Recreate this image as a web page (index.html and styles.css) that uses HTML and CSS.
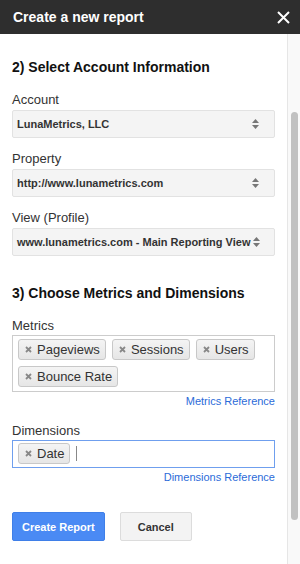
FILE: index.html
```html
<!DOCTYPE html>
<html lang="en">
<head>
    <meta charset="UTF-8">
    <meta name="viewport" content="width=device-width, initial-scale=1.0">
    <title>Create a new report</title>
    <link rel="stylesheet" href="styles.css">
</head>
<body>
    <header class="dialog-header">
        <span class="dialog-title">Create a new report</span>
        <svg class="close-icon" width="13" height="13" viewBox="0 0 13 13">
            <path d="M1 1 L12 12 M12 1 L1 12" stroke="#fff" stroke-width="2" fill="none"/>
        </svg>
    </header>

    <div class="dialog-body">
        <main class="panel">
            <h2 class="section-title">2) Select Account Information</h2>

            <label class="field-label">Account</label>
            <div class="select">
                <span>LunaMetrics, LLC</span>
                <svg class="arrows" width="7" height="10" viewBox="0 0 7 10"><path d="M3.5 0 L7 4 L0 4 Z M0 6 L7 6 L3.5 10 Z" fill="#777"/></svg>
            </div>

            <label class="field-label">Property</label>
            <div class="select">
                <span>http://www.lunametrics.com</span>
                <svg class="arrows" width="7" height="10" viewBox="0 0 7 10"><path d="M3.5 0 L7 4 L0 4 Z M0 6 L7 6 L3.5 10 Z" fill="#777"/></svg>
            </div>

            <label class="field-label">View (Profile)</label>
            <div class="select">
                <span>www.lunametrics.com - Main Reporting View</span>
                <svg class="arrows" width="7" height="10" viewBox="0 0 7 10"><path d="M3.5 0 L7 4 L0 4 Z M0 6 L7 6 L3.5 10 Z" fill="#777"/></svg>
            </div>

            <h2 class="section-title second">3) Choose Metrics and Dimensions</h2>

            <label class="field-label">Metrics</label>
            <div class="chip-box">
                <span class="chip"><svg width="7" height="7" viewBox="0 0 7 7"><path d="M1 1 L6 6 M6 1 L1 6" stroke="#888" stroke-width="1.8"/></svg>Pageviews</span>
                <span class="chip"><svg width="7" height="7" viewBox="0 0 7 7"><path d="M1 1 L6 6 M6 1 L1 6" stroke="#888" stroke-width="1.8"/></svg>Sessions</span>
                <span class="chip"><svg width="7" height="7" viewBox="0 0 7 7"><path d="M1 1 L6 6 M6 1 L1 6" stroke="#888" stroke-width="1.8"/></svg>Users</span>
                <span class="chip"><svg width="7" height="7" viewBox="0 0 7 7"><path d="M1 1 L6 6 M6 1 L1 6" stroke="#888" stroke-width="1.8"/></svg>Bounce Rate</span>
            </div>
            <a class="ref-link" href="#">Metrics Reference</a>

            <label class="field-label dims">Dimensions</label>
            <div class="chip-box focused">
                <span class="chip"><svg width="7" height="7" viewBox="0 0 7 7"><path d="M1 1 L6 6 M6 1 L1 6" stroke="#888" stroke-width="1.8"/></svg>Date</span>
                <span class="caret"></span>
            </div>
            <a class="ref-link" href="#">Dimensions Reference</a>

            <div class="actions">
                <button class="btn btn-primary">Create Report</button>
                <button class="btn">Cancel</button>
            </div>
        </main>
        <div class="scrollbar">
            <div class="scroll-thumb"></div>
        </div>
    </div>
</body>
</html>
```

FILE: styles.css
```css
body {
    margin: 0;
    padding: 0;
    font-family: 'Liberation Sans', Arial, sans-serif;
    color: #222;
    background: #fff;
    width: 300px;
    height: 564px;
    overflow: hidden;
}

.dialog-header {
    height: 34px;
    background: #2e2e2e;
    display: flex;
    align-items: center;
    justify-content: space-between;
    padding: 0 10px 0 13px;
}

.dialog-title {
    color: #fff;
    font-size: 14px;
    font-weight: bold;
    margin-top: -1px;
}

.close-icon {
    display: block;
    margin-top: 1px;
}

.dialog-body {
    display: flex;
    height: 530px;
}

.panel {
    width: 263px;
    padding: 0 12px;
    display: flex;
    flex-direction: column;
}

.section-title {
    font-size: 14px;
    font-weight: bold;
    line-height: 18px;
    margin: 24px 0 16px;
    color: #111;
}

.section-title.second {
    margin-top: 15px;
}

.field-label {
    font-size: 13px;
    line-height: 16px;
    color: #333;
    margin-bottom: 2px;
}

.select {
    height: 26px;
    border: 1px solid #e2e2e2;
    border-radius: 2px;
    background: #f4f4f4;
    display: flex;
    align-items: center;
    justify-content: space-between;
    gap: 2px;
    padding: 0 15px 0 4px;
    margin-bottom: 13px;
    font-size: 11px;
    font-weight: bold;
    color: #333;
    white-space: nowrap;
}

.arrows {
    display: block;
    flex-shrink: 0;
}

.chip-box {
    border: 1px solid #ccc;
    background: #fff;
    display: flex;
    flex-wrap: wrap;
    gap: 6px;
    padding: 3px 5px 4px;
    margin-top: -1px;
}

.chip-box.focused {
    border-color: #6f9fee;
    padding: 2px 5px 3px;
    align-items: center;
}

.chip {
    height: 19px;
    border: 1px solid #c8c8c8;
    border-radius: 3px;
    background: linear-gradient(#f4f4f4, #e6e6e6);
    display: flex;
    align-items: center;
    gap: 5px;
    padding: 0 5px 0 6px;
    font-size: 13px;
    color: #333;
}

.chip svg {
    display: block;
}

.caret {
    width: 1px;
    height: 15px;
    background: #888;
}

.ref-link {
    align-self: flex-end;
    font-size: 11px;
    line-height: 14px;
    color: #2b6bd9;
    text-decoration: none;
    margin-top: 2px;
}

.field-label.dims {
    margin-top: 15px;
}

.actions {
    display: flex;
    gap: 15px;
    margin-top: 28px;
}

.btn {
    height: 29px;
    min-width: 72px;
    padding: 0 9px;
    border: 1px solid #dcdcdc;
    border-radius: 2px;
    background: #f3f3f3;
    color: #333;
    font-family: 'Liberation Sans', Arial, sans-serif;
    font-size: 11px;
    font-weight: bold;
    cursor: pointer;
}

.btn-primary {
    background: #4a8af4;
    border-color: #3f7fe8;
    color: #fff;
}

.scrollbar {
    width: 12px;
    border-left: 1px solid #e6e6e6;
    background: #f9f9f9;
}

.scroll-thumb {
    width: 7px;
    height: 408px;
    margin: 78px 0 0 3px;
    border-radius: 4px;
    background: #c1c1c1;
}
```
